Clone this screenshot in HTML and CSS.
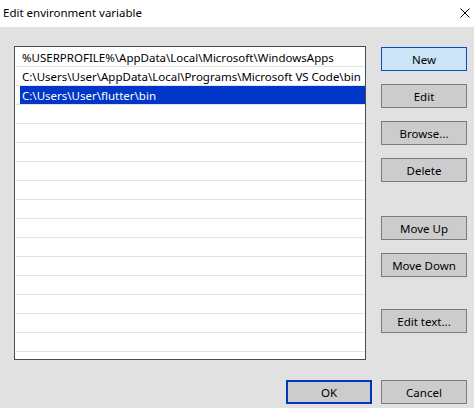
FILE: index.html
```html
<!DOCTYPE html>
<html>
<head>
<meta charset="utf-8">
<link rel="stylesheet" href="styles.css">
</head>
<body>
<div class="dialog">
  <div class="titlebar">
    <span class="title">Edit environment variable</span>
    <svg class="close" width="10" height="10" viewBox="0 0 10 10"><path d="M0.5 0.5 L9.5 9.5 M9.5 0.5 L0.5 9.5" stroke="#000" stroke-width="1" fill="none"/></svg>
  </div>
  <div class="content">
    <div class="main">
      <div class="list">
        <div class="row"><span class="cell">%USERPROFILE%\AppData\Local\Microsoft\WindowsApps</span></div>
        <div class="row"><span class="cell">C:\Users\User\AppData\Local\Programs\Microsoft VS Code\bin</span></div>
        <div class="row"><span class="cell selected">C:\Users\User\flutter\bin</span></div>
        <div class="row"></div>
        <div class="row"></div>
        <div class="row"></div>
        <div class="row"></div>
        <div class="row"></div>
        <div class="row"></div>
        <div class="row"></div>
        <div class="row"></div>
        <div class="row"></div>
        <div class="row"></div>
        <div class="row"></div>
        <div class="row"></div>
        <div class="row"></div>
        <div class="row"></div>
      </div>
      <div class="buttons">
        <button class="btn primary">New</button>
        <button class="btn">Edit</button>
        <button class="btn">Browse...</button>
        <button class="btn">Delete</button>
        <button class="btn gap-before">Move Up</button>
        <button class="btn">Move Down</button>
        <button class="btn gap-before2">Edit text...</button>
      </div>
    </div>
    <div class="footer">
      <button class="btn default">OK</button>
      <button class="btn">Cancel</button>
    </div>
  </div>
</div>
</body>
</html>
```

FILE: styles.css
```css
* { box-sizing: border-box; }
html, body {
  margin: 0;
  padding: 0;
  width: 474px;
  height: 408px;
  overflow: hidden;
  background: #e1e1e1;
  font-family: "Noto Sans", "Open Sans", sans-serif;
  font-size: 11.5px;
  color: #000;
}
.dialog {
  width: 474px;
  height: 408px;
  display: flex;
  flex-direction: column;
}
.titlebar {
  height: 27px;
  background: #fff;
  display: flex;
  align-items: center;
  justify-content: space-between;
  padding: 0 4px 2px 3px;
}
.title {
  font-size: 11.5px;
  line-height: 16px;
}
.close {
  display: block;
  margin-top: 1px;
}
.content {
  flex: 1;
  display: flex;
  flex-direction: column;
  padding: 19px 7px 0 14px;
}
.main {
  display: flex;
  gap: 15px;
}
.list {
  width: 352px;
  height: 314px;
  background: #fff;
  border: 1px solid #464b55;
  padding: 1px 0 0 1px;
  overflow: hidden;
}
.row {
  height: 19px;
  border-bottom: 1px solid #e3e3e3;
  padding-left: 4px;
  display: flex;
}
.cell {
  display: block;
  flex: 1;
  height: 18px;
  line-height: 19px;
  padding-left: 2px;
  white-space: nowrap;
  overflow: hidden;
}
.cell.selected {
  background: #0037c8;
  color: #fff;
}
.buttons {
  display: flex;
  flex-direction: column;
  gap: 13px;
  padding-top: 1px;
}
.btn {
  width: 86px;
  height: 24px;
  margin: 0;
  padding: 1px 0 0;
  background: #cccccc;
  border: 1px solid #7a7a7a;
  font-family: inherit;
  font-size: 11.5px;
  color: #000;
  line-height: 20px;
}
.btn.primary {
  background: #cce4f7;
  border-color: #0050c8;
}
.btn.gap-before { margin-top: 21px; }
.btn.gap-before2 { margin-top: 19px; }
.btn.default {
  border: 2px solid #0037b4;
}
.footer {
  display: flex;
  justify-content: flex-end;
  gap: 9px;
  margin-top: 20px;
}
```
